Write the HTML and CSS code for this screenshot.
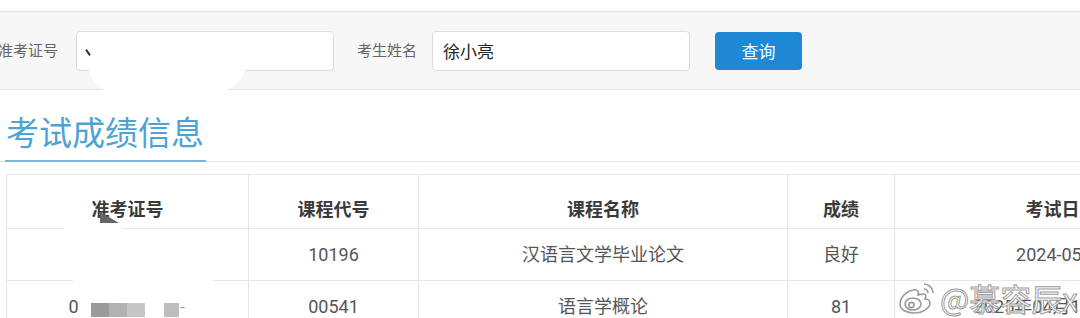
FILE: index.html
```html
<!DOCTYPE html>
<html lang="zh-CN">
<head>
<meta charset="utf-8">
<title>考试成绩信息</title>
<link rel="stylesheet" href="styles.css">
</head>
<body>
<div class="page">
  <form class="search">
    <label class="lbl lbl-first">准考证号</label>
    <div class="input"><span class="mark"></span></div>
    <label class="lbl lbl-second">考生姓名</label>
    <div class="input name">徐小亮</div>
    <button class="btn" type="button">查询</button>
  </form>

  <div class="section-head"><h2 class="title">考试成绩信息</h2></div>

  <table class="grid">
    <colgroup>
      <col class="c1"><col class="c2"><col class="c3"><col class="c4"><col class="c5">
    </colgroup>
    <thead>
      <tr><th>准考证号</th><th>课程代号</th><th>课程名称</th><th>成绩</th><th>考试日期</th></tr>
    </thead>
    <tbody>
      <tr><td></td><td>10196</td><td>汉语言文学毕业论文</td><td>良好</td><td>2024-05-12</td></tr>
      <tr>
        <td><span class="zero">0</span><span class="px px1"></span><span class="px px2"></span><span class="px px3"></span><span class="px px4"></span><span class="tail">-</span></td>
        <td>00541</td><td>语言学概论</td><td>81</td><td>2025年04月12日 上午</td>
      </tr>
    </tbody>
  </table>

  <div class="blob blob-top"></div>
  <div class="blob blob-r1"></div>
  <div class="blob blob-r2"></div>
  <svg class="shard" width="20" height="12" viewBox="0 0 20 12"><path d="M0 0 L0 11 L19 11 Z" fill="#666"/></svg>

  <div class="watermark">
    <svg class="wb" width="40" height="34" viewBox="0 0 40 34">
      <g fill="#fff" stroke="#9a9a9a" stroke-width="1.6">
        <path d="M16 9c-6 1-13 7-13 14 0 6 7 9 14 9 9 0 16-5 16-10 0-3-3-4-5-4 1-2 2-5-2-5-2 0-4 1-5 1 1-3 0-6-5-5z"/>
        <ellipse cx="16" cy="23" rx="8" ry="6"/>
        <circle cx="14.5" cy="24" r="2.6"/>
        <path d="M27 3a9 9 0 0 1 9 9" fill="none"/>
        <path d="M27 8a4 4 0 0 1 4 4" fill="none"/>
      </g>
    </svg>
    <span class="wm-text">@慕容辰x</span>
  </div>
</div>
</body>
</html>
```

FILE: styles.css
```css
* { box-sizing: border-box; }
html, body { margin: 0; padding: 0; background: #fff; overflow: hidden; }
body {
  width: 1080px;
  height: 318px;
  font-family: Roboto, "Noto Sans CJK SC", "Noto Sans", sans-serif;
  color: #333;
}
.page { position: relative; width: 1080px; height: 318px; overflow: hidden; }

/* search bar */
.search {
  margin: 11px 0 0;
  height: 79px;
  background: #f7f7f7;
  border-top: 1px solid #e4e4e4;
  border-bottom: 1px solid #e4e4e4;
  display: flex;
  align-items: center;
}
.lbl {
  font-size: 15px;
  color: #666;
  width: 60px;
  white-space: nowrap;
  line-height: 20px;
}
.lbl-first { margin-left: -2px; margin-right: 18px; }
.lbl-second { margin-left: 23px; margin-right: 15px; }
.input {
  position: relative;
  width: 258px;
  height: 40px;
  background: #fff;
  border: 1px solid #dcdcdc;
  border-radius: 4px;
  display: flex;
  align-items: center;
  padding-left: 10px;
  font-size: 17px;
  color: #222;
}
.mark {
  position: absolute;
  left: 10px;
  top: 17px;
  width: 2px;
  height: 7px;
  background: #333;
  transform: rotate(-35deg);
}
.btn {
  margin-left: 25px;
  width: 87px;
  height: 38px;
  background: #1e88d5;
  color: #fff;
  border: 0;
  border-radius: 4px;
  font-family: "Noto Sans CJK SC", sans-serif;
  font-size: 17px;
  padding: 0;
}

/* section title */
.section-head {
  margin-top: 20px;
  border-bottom: 1px solid #e6e6e6;
  padding-left: 5px;
  display: flex;
}
.title {
  margin: 0 0 -1px;
  padding: 0 1px 8px 1px;
  width: 201px;
  font-family: "Noto Sans CJK SC", sans-serif;
  font-weight: 400;
  font-size: 33px;
  line-height: 42px;
  color: #4ea3d6;
  border-bottom: 2px solid #7db5d9;
}

/* table */
.grid {
  margin: 12px 0 0 6px;
  border-collapse: collapse;
  table-layout: fixed;
  width: 1222px;
  border: 1px solid #e6e6e6;
}
.c1 { width: 242px; }
.c2 { width: 170px; }
.c3 { width: 369px; }
.c4 { width: 107px; }
.c5 { width: 334px; }
.grid th, .grid td {
  border: 1px solid #e6e6e6;
  text-align: center;
  white-space: nowrap;
  font-size: 18px;
  line-height: 24px;
}
.grid th {
  height: 54px;
  padding: 12px 0 0;
  font-family: "Noto Sans CJK SC", sans-serif;
  font-weight: 700;
  color: #3a3a3a;
}
.grid td {
  height: 52px;
  padding: 0;
  color: #555;
}
.zero { display: inline-block; width: 8px; margin-right: 14px; }
.px { display: inline-block; height: 14px; vertical-align: -4px; }
.px1 { width: 18px; background: #9a9a9a; }
.px2 { width: 18px; background: #b2b2b2; }
.px3 { width: 18px; background: #c6c6c6; margin-right: 19px; }
.px4 { width: 15px; background: #bdbdbd; }
.tail { display: inline-block; width: 8px; color: #aaa; }

/* redaction overlays */
.blob { position: absolute; background: #fff; }
.blob-top { left: 90px; top: 34px; width: 155px; height: 68px; border-radius: 45% 50% 50% 45%; }
.blob-r1 { left: 64px; top: 225px; width: 58px; height: 7px; }
.blob-r2 { left: 73px; top: 278px; width: 140px; height: 7px; }
.shard { position: absolute; left: 100px; top: 212px; }

/* watermark */
.watermark {
  position: absolute;
  left: 897px;
  top: 280px;
  display: flex;
  align-items: center;
  gap: 3px;
}
.wm-text {
  font-family: "Noto Sans CJK SC", sans-serif;
  font-size: 31px;
  line-height: 36px;
  color: rgba(255, 255, 255, 0.85);
  -webkit-text-stroke: 1px #9c9c9c;
}
```
